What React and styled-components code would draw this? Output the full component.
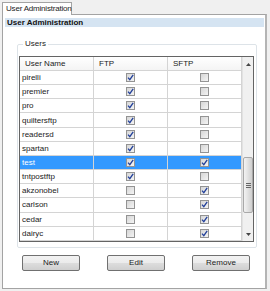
import styled, { createGlobalStyle } from 'styled-components';

const GlobalStyle = createGlobalStyle`
  html, body {
    margin: 0;
    padding: 0;
    background: #f0f0f0;
  }
  * {
    box-sizing: border-box;
  }
`;

const users = [
  { name: 'pirelli', ftp: true, sftp: false },
  { name: 'premier', ftp: true, sftp: false },
  { name: 'pro', ftp: true, sftp: false },
  { name: 'quiltersftp', ftp: true, sftp: false },
  { name: 'readersd', ftp: true, sftp: false },
  { name: 'spartan', ftp: true, sftp: false },
  { name: 'test', ftp: true, sftp: true, selected: true },
  { name: 'tntpostftp', ftp: true, sftp: false },
  { name: 'akzonobel', ftp: false, sftp: true },
  { name: 'carlson', ftp: false, sftp: true },
  { name: 'cedar', ftp: false, sftp: true },
  { name: 'dairyc', ftp: false, sftp: true },
];

const Window = styled.div`
  width: 270px;
  height: 291px;
  padding: 2px 0 0 2px;
  background: #f0f0f0;
  font-family: "Liberation Sans", Arial, sans-serif;
  font-size: 8px;
  color: #1b1b1b;
  overflow: hidden;
`;

const TabStrip = styled.div`
  display: flex;
  height: 12px;
`;

const Tab = styled.div`
  position: relative;
  z-index: 1;
  width: 70px;
  height: 13px;
  padding: 1px 0 0 3px;
  background: #fff;
  border: 1px solid #a3a3a3;
  border-bottom: none;
  line-height: 10px;
  letter-spacing: -0.2px;
  white-space: nowrap;
`;

const Panel = styled.div`
  width: 265px;
  height: 275px;
  padding: 3px 1px 0 2px;
  background: #fff;
  border: 1px solid #a3a3a3;
  border-right: 2px solid #b4b4b4;
`;

const HeaderBar = styled.div`
  height: 9px;
  padding-left: 2px;
  background: #d5e4f2;
  font-weight: bold;
  line-height: 9px;
  color: #111;
`;

const Group = styled.fieldset`
  width: 240px;
  margin: 12px 0 0 12px;
  padding: 7px 1px 5px 1px;
  border: 1px solid #dde3e8;
  border-radius: 2px;
`;

const Legend = styled.legend`
  margin-left: 4px;
  padding: 0 2px;
  line-height: 10px;
  color: #222;
`;

const Table = styled.div`
  display: flex;
  width: 235px;
  height: 186px;
  border: 1px solid #646464;
`;

const Grid = styled.div`
  flex: 1;
  display: flex;
  flex-direction: column;
`;

const Row = styled.div`
  display: grid;
  grid-template-columns: 74px 74px 74px;
  height: ${p => (p.$head ? '14px' : '14.17px')};
  border-bottom: 1px solid #d4d4d4;
  background: ${p => (p.$selected ? '#3399ff' : p.$head ? 'linear-gradient(#ffffff, #f4f4f4)' : '#fff')};
  color: ${p => (p.$selected ? '#fff' : '#1b1b1b')};
`;

const Cell = styled.div`
  display: flex;
  align-items: center;
  justify-content: ${p => (p.$center ? 'center' : 'flex-start')};
  padding-left: ${p => (p.$center ? '0' : p.$head ? '5px' : '2px')};
  border-right: 1px solid #d4d4d4;
  white-space: nowrap;
  overflow: hidden;
`;

const Box = styled.span`
  display: inline-flex;
  align-items: center;
  justify-content: center;
  width: 9px;
  height: 9px;
  border: 1px solid #939393;
  background: linear-gradient(135deg, #d6d6d6, #f4f4f4);
`;

const Scrollbar = styled.div`
  width: 11px;
  display: flex;
  flex-direction: column;
  background: #f0f0f0;
  border-left: 1px solid #e2e2e2;
`;

const Arrow = styled.div`
  height: 14px;
  display: flex;
  align-items: center;
  justify-content: center;
`;

const Track = styled.div`
  flex: 1;
  display: flex;
  flex-direction: column;
  padding-top: 86px;
`;

const Thumb = styled.div`
  height: 56px;
  margin: 0 0 0 0;
  display: flex;
  flex-direction: column;
  align-items: center;
  justify-content: center;
  gap: 1px;
  border: 1px solid #a9a9a9;
  border-radius: 2px;
  background: linear-gradient(90deg, #f3f3f3, #dedede 60%, #cfcfcf);
`;

const Grip = styled.span`
  width: 5px;
  height: 1px;
  background: #666;
`;

const Buttons = styled.div`
  display: flex;
  gap: 27px;
  margin: 7px 0 0 17px;
`;

const Button = styled.button`
  width: 58px;
  height: 16px;
  padding: 0;
  border: 1px solid #707070;
  border-radius: 2px;
  background: linear-gradient(#f2f2f2 0%, #ebebeb 50%, #dddddd 51%, #cfcfcf 100%);
  font-family: "Liberation Sans", Arial, sans-serif;
  font-size: 8px;
  color: #1b1b1b;
  line-height: 14px;
`;

const Check = ({ on }) => (
  <Box>
    {on && (
      <svg width="7" height="7" viewBox="0 0 7 7">
        <path d="M1 3.6 L2.8 5.6 L6.2 0.8" fill="none" stroke="#22409a" strokeWidth="1.3" />
      </svg>
    )}
  </Box>
);

const UserTable = () => (
  <Table>
    <Grid>
      <Row $head>
        <Cell $head>User Name</Cell>
        <Cell $head>FTP</Cell>
        <Cell $head>SFTP</Cell>
      </Row>
      {users.map(u => (
        <Row key={u.name} $selected={u.selected}>
          <Cell>{u.name}</Cell>
          <Cell $center><Check on={u.ftp} /></Cell>
          <Cell $center><Check on={u.sftp} /></Cell>
        </Row>
      ))}
    </Grid>
    <Scrollbar>
      <Arrow>
        <svg width="5" height="3" viewBox="0 0 5 3"><path d="M0 3 L2.5 0 L5 3 Z" fill="#444" /></svg>
      </Arrow>
      <Track>
        <Thumb>
          <Grip />
          <Grip />
          <Grip />
        </Thumb>
      </Track>
      <Arrow>
        <svg width="5" height="3" viewBox="0 0 5 3"><path d="M0 0 L2.5 3 L5 0 Z" fill="#444" /></svg>
      </Arrow>
    </Scrollbar>
  </Table>
);

export default function App() {
  return (
    <Window>
      <GlobalStyle />
      <TabStrip>
        <Tab>User Administration</Tab>
      </TabStrip>
      <Panel>
        <HeaderBar>User Administration</HeaderBar>
        <Group>
          <Legend>Users</Legend>
          <UserTable />
        </Group>
        <Buttons>
          <Button>New</Button>
          <Button>Edit</Button>
          <Button>Remove</Button>
        </Buttons>
      </Panel>
    </Window>
  );
}
